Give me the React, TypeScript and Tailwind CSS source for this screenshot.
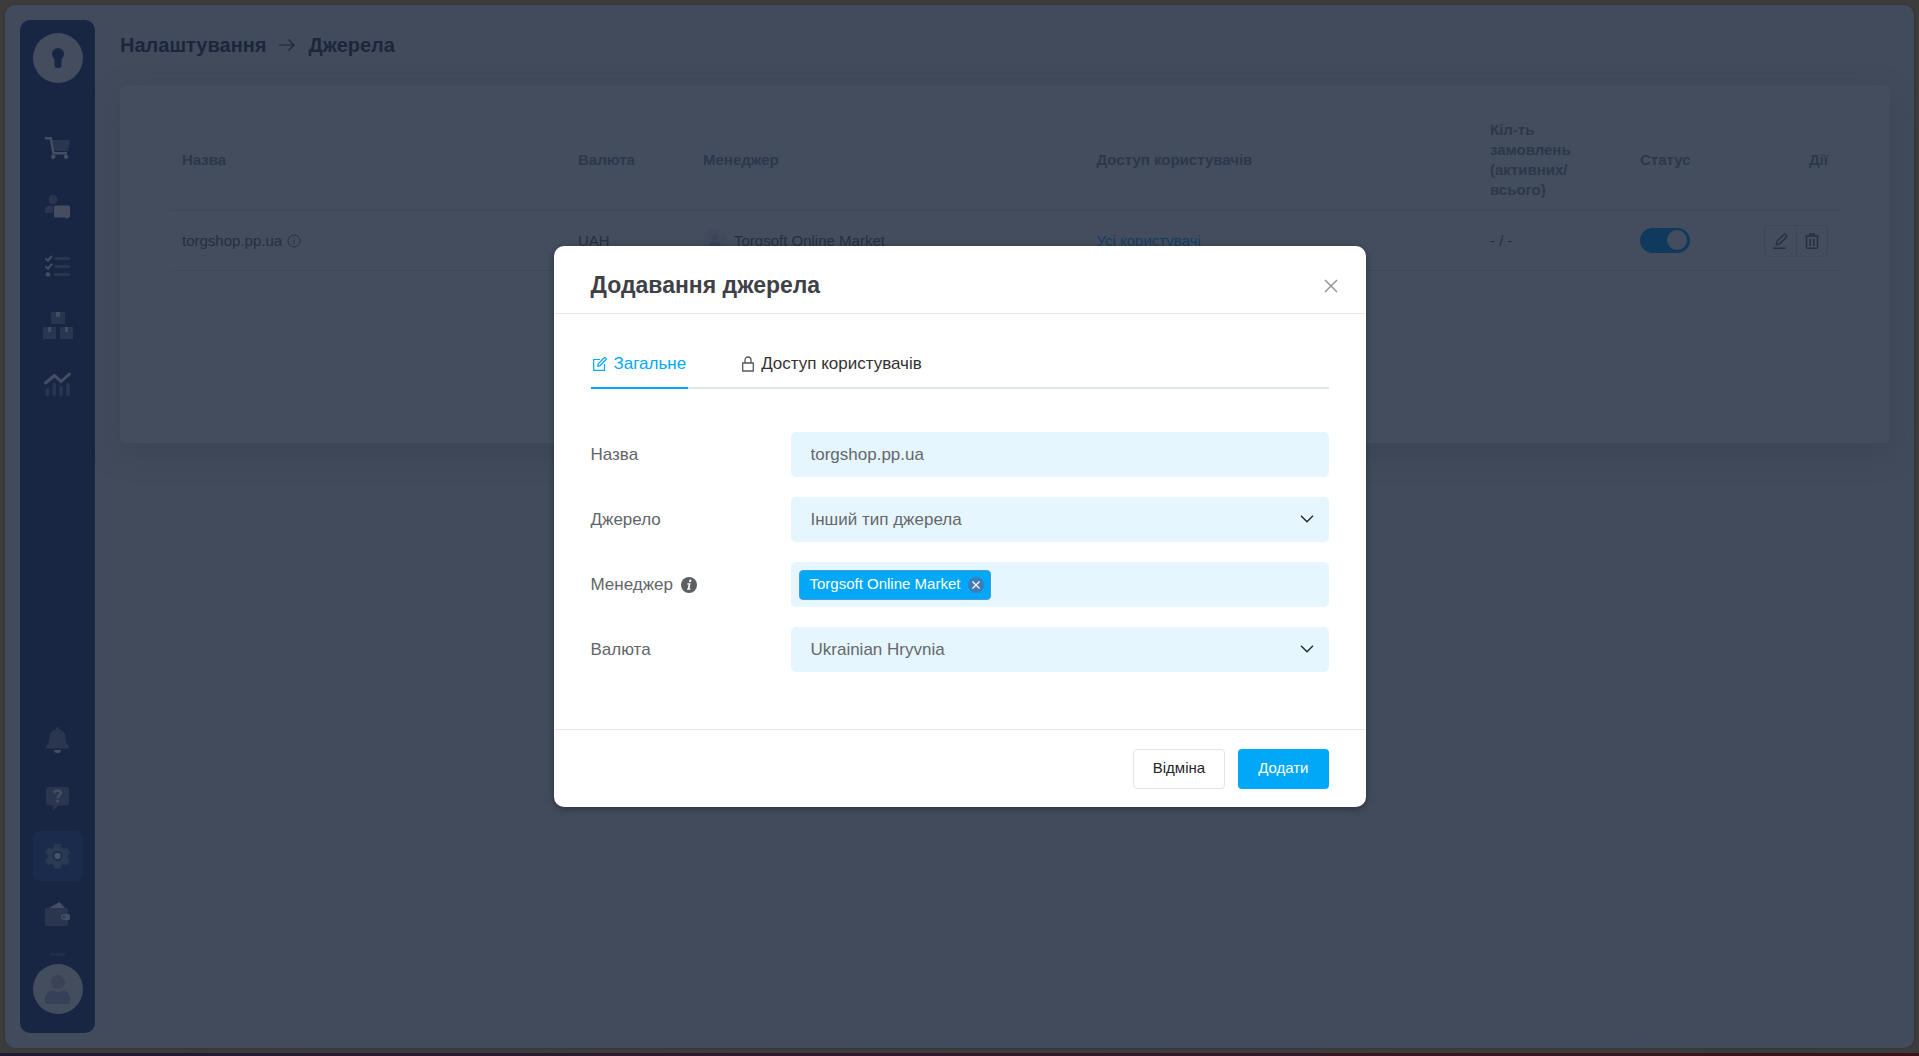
import type { ReactNode } from "react";

const faint = "#2a3650";
const strong = "#454e60";

function NavIcon({ children }: { children: ReactNode }) {
  return (
    <svg aria-hidden="true" className="size-[30px]" fill="none" viewBox="0 0 30 30">
      {children}
    </svg>
  );
}

const mainNav = [
  {
    label: "Замовлення",
    icon: (
      <NavIcon>
        <path d="M9 7h18l-2 11H11z" fill={faint} />
        <path d="M2 5.3h5.8l2.6 15H24" stroke={strong} strokeWidth="2.4" />
        <circle cx="10.3" cy="23.8" fill={strong} r="2.3" />
        <circle cx="23" cy="23.8" fill={strong} r="2.3" />
      </NavIcon>
    ),
  },
  {
    label: "Клієнти",
    icon: (
      <NavIcon>
        <circle cx="10" cy="7.5" fill={faint} r="4.5" />
        <path d="M2 21v-2.5c0-3 2.2-5 5-5h3V21z" fill={faint} />
        <path
          d="M12.500 13.500h13A1.500 1.500 0 0 1 27 15v9a1.500 1.500 0 0 1-1.500 1.500H25V27l-3-1.500h-9.500A1.500 1.500 0 0 1 11 24v-9a1.500 1.500 0 0 1 1.500-1.500z"
          fill={strong}
        />
      </NavIcon>
    ),
  },
  {
    label: "Завдання",
    icon: (
      <NavIcon>
        <path
          d="M2.500 7.500l2.500 2 4-4.500M2.500 15.500l2.500 2 4-4.500"
          stroke={strong}
          strokeWidth="2.2"
        />
        <circle cx="5" cy="23.5" fill={strong} r="2.3" />
        <path d="M11.500 7.500H27M11.500 15.500H27M11.500 23.500H27" stroke={faint} strokeWidth="3" />
      </NavIcon>
    ),
  },
  {
    label: "Товари",
    icon: (
      <NavIcon>
        <path d="M8 2h14v12H8zM0 17h13v12H0zM17 17h13v12H17z" fill={faint} />
        <path d="M13 2h4v5h-4zM5 17h3v5H5zM22 17h3v5h-3z" fill={strong} />
      </NavIcon>
    ),
  },
  {
    label: "Аналітика",
    icon: (
      <NavIcon>
        <path
          d="M4.500 20.500v5M11.300 15.500v10M18 18.500v7M25 15.500v10"
          stroke={faint}
          strokeLinecap="round"
          strokeWidth="3.5"
        />
        <path
          d="M2.500 14L11.500 6.500l6.500 6L26.500 5"
          stroke={strong}
          strokeLinecap="round"
          strokeWidth="3"
        />
      </NavIcon>
    ),
  },
];

const bottomNav = [
  {
    label: "Сповіщення",
    active: false,
    icon: (
      <NavIcon>
        <path
          d="M14.500 2a1.600 1.600 0 0 1 1.600 1.800v.6c4 .8 6.600 4 6.600 8.200 0 5 1 6.500 3 8.400 1 1 .5 2.500-.8 2.500H4.100c-1.300 0-1.800-1.500-.8-2.500 2-1.900 3-3.400 3-8.400 0-4.200 2.600-7.400 6.600-8.200v-.6A1.600 1.600 0 0 1 14.500 2z"
          fill={faint}
        />
        <path d="M11 25h7a3.500 3 0 0 1-7 0z" fill={strong} />
      </NavIcon>
    ),
  },
  {
    label: "Допомога",
    active: false,
    icon: (
      <NavIcon>
        <path
          d="M6 4h17a3 3 0 0 1 3 3v12.500a3 3 0 0 1-3 3h-7L10 27v-4.500H6a3 3 0 0 1-3-3V7a3 3 0 0 1 3-3z"
          fill={faint}
        />
        <path
          d="M11.300 10.500c0-2 1.400-3 3.200-3s3.300 1 3.300 2.800c0 2.200-3.300 2.300-3.300 5"
          stroke={strong}
          strokeWidth="2.3"
        />
        <circle cx="14.5" cy="18" fill={strong} r="1.6" />
      </NavIcon>
    ),
  },
  {
    label: "Налаштування",
    active: true,
    icon: (
      <NavIcon>
        <path
          d="M11.500 3h6l.8 3.600 2.200 1.300L24 6.800l3 5.200-2.700 2.300v2.400L27 19l-3 5-3.500-1.100-2.200 1.300-.8 3.300h-6l-.8-3.300-2.200-1.300L5 24l-3-5 2.700-2.300v-2.400L2 12l3-5.200 3.500 1.100 2.200-1.300z"
          fill="#2b3a53"
        />
        <circle cx="14.5" cy="15" fill="#1a2846" r="4.8" />
        <circle cx="14.5" cy="15" fill="#4a5364" r="3.2" />
      </NavIcon>
    ),
  },
  {
    label: "Баланс",
    active: false,
    icon: (
      <NavIcon>
        <path d="M6 9l10.500-6 5.500 6z" fill={strong} />
        <path
          d="M3.500 9h20A1.500 1.500 0 0 1 25 10.500v15a1.500 1.500 0 0 1-1.500 1.500h-20A1.500 1.500 0 0 1 2 25.500v-15A1.500 1.500 0 0 1 3.500 9z"
          fill={faint}
        />
        <path d="M21 15h4.500A1.500 1.500 0 0 1 27 16.500v3a1.500 1.500 0 0 1-1.500 1.500H21a3 3 0 0 1 0-6z" fill={strong} />
        <circle cx="20.8" cy="18" fill={faint} r="1.2" />
      </NavIcon>
    ),
  },
];

function Person({ className }: { className: string }) {
  return (
    <svg aria-hidden="true" className={className} viewBox="0 0 50 50">
      <circle cx="25" cy="18" fill="#3b4457" r="7" />
      <path
        d="M12 38c0-8 3-11 8-11.500 3 1.500 7 1.500 10 0 5 .5 7 4 7 11.500 0 1.500-1 2-2 2H14c-1 0-2-.5-2-2z"
        fill="#364157"
      />
    </svg>
  );
}

function Sidebar() {
  return (
    <aside className="flex w-[75px] shrink-0 flex-col rounded-[10px] bg-[#182644] pt-[13px] pb-[19px] pl-[13px]">
      <a
        aria-label="Головна"
        className="flex size-[50px] items-center justify-center rounded-full bg-[#444d5d]"
        href="#home"
      >
        <svg className="h-5 w-3" viewBox="0 0 12 20">
          <circle cx="6" cy="6" fill="#182644" r="6" />
          <rect fill="#182644" height="13" rx="3" width="7" x="2.5" y="7" />
        </svg>
      </a>
      <nav className="mt-10 flex flex-col gap-[9px]">
        {mainNav.map((item) => (
          <a
            aria-label={item.label}
            className="flex size-[50px] items-center justify-center"
            href="#nav"
            key={item.label}
          >
            {item.icon}
          </a>
        ))}
      </nav>
      <nav className="mt-auto flex flex-col gap-2">
        {bottomNav.map((item) => (
          <a
            aria-label={item.label}
            className={
              item.active
                ? "flex size-[50px] items-center justify-center rounded-md bg-[#1b2b4b]"
                : "flex size-[50px] items-center justify-center"
            }
            href="#nav"
            key={item.label}
          >
            {item.icon}
          </a>
        ))}
      </nav>
      <div className="mt-[14px] ml-[17px] h-[3px] w-[15px] bg-[#212e4b]" />
      <button
        aria-label="Профіль"
        className="mt-2 size-[50px] shrink-0 rounded-full bg-[#444d5d]"
        type="button"
      >
        <Person className="size-[50px]" />
      </button>
    </aside>
  );
}

function SourcesTable() {
  const th = "border-b border-[#3f485a] px-3 py-[10px] font-bold";
  const td = "h-[60px] border-b border-[#3f485a] px-3";

  return (
    <table className="w-full table-fixed border-separate border-spacing-0 text-left text-[15px] leading-5">
      <colgroup>
        <col className="w-[396px]" />
        <col className="w-[125px]" />
        <col />
        <col />
        <col className="w-[150px]" />
        <col className="w-[212px]" />
      </colgroup>
      <thead className="text-[#2c374c]">
        <tr>
          <th className={th}>Назва</th>
          <th className={th}>Валюта</th>
          <th className={th}>Менеджер</th>
          <th className={th}>Доступ користувачів</th>
          <th className={th}>Кіл-ть замовлень (активних/ всього)</th>
          <th className={th}>
            <div className="flex justify-between">
              <span>Статус</span>
              <span>Дії</span>
            </div>
          </th>
        </tr>
      </thead>
      <tbody className="text-[#242f43]">
        <tr>
          <td className={td}>
            <div className="flex items-center gap-[5px]">
              torgshop.pp.ua
              <svg className="size-[14px]" fill="none" stroke="currentColor" viewBox="0 0 14 14">
                <circle cx="7" cy="7" r="6" />
                <path d="M7 6v4.500M7 3.500v1.200" />
              </svg>
            </div>
          </td>
          <td className={td}>UAH</td>
          <td className={td}>
            <div className="flex items-center gap-[7px]">
              <Person className="size-6 rounded-full bg-[#404a5c]" />
              Torgsoft Online Market
            </div>
          </td>
          <td className={td}>
            <a className="text-[#123d62]" href="#users">
              Усі користувачі
            </a>
          </td>
          <td className={td}>- / -</td>
          <td className={td}>
            <div className="flex items-center justify-between">
              <input
                aria-label="Статус"
                className="h-[25px] w-[50px] appearance-none rounded-full bg-[#0f3a5e] p-[2px] before:ml-[25px] before:block before:size-5 before:rounded-full before:bg-[#444d5d]"
                defaultChecked
                type="checkbox"
              />
              <div className="flex h-8 w-16 divide-x divide-[#3e4759] rounded-[4px] border border-[#3e4759]">
                <button
                  aria-label="Редагувати"
                  className="flex flex-1 items-center justify-center"
                  type="button"
                >
                  <svg className="size-4" fill="none" stroke="currentColor" strokeWidth="1.4" viewBox="0 0 16 16">
                    <path d="M1 15.300h12.500M4.500 11.800l.6-3.600L12 1.400a1 1 0 0 1 1.400 0l1.100 1.100a1 1 0 0 1 0 1.400L7.800 10.800z" />
                  </svg>
                </button>
                <button
                  aria-label="Видалити"
                  className="flex flex-1 items-center justify-center"
                  type="button"
                >
                  <svg className="size-4" fill="none" stroke="currentColor" strokeWidth="1.4" viewBox="0 0 16 16">
                    <path d="M1 3h14M5 3l1-2h4l1 2M2.500 3v11.300a1 1 0 0 0 1 1h9a1 1 0 0 0 1-1V3M6.200 6v7M9.800 6v7" />
                  </svg>
                </button>
              </div>
            </div>
          </td>
        </tr>
      </tbody>
    </table>
  );
}

function Chevron() {
  return (
    <svg
      aria-hidden="true"
      className="pointer-events-none absolute top-[18px] right-[15px] h-2 w-[14px]"
      fill="none"
      stroke="#23272b"
      strokeWidth="1.4"
      viewBox="0 0 14 8"
    >
      <path d="M1 .8l6 6 6-6" />
    </svg>
  );
}

const control =
  "h-[45px] w-full appearance-none rounded-[5px] bg-[#e5f6ff] px-5 text-[17px] text-[#65686c] outline-none";

function SourceDialog() {
  return (
    <div
      aria-labelledby="dialog-title"
      className="w-[812px] rounded-[10px] bg-white text-[17px] text-[#626569] shadow-[0_2px_6px_rgba(20,28,42,0.5)]"
      role="dialog"
    >
      <div className="flex h-[68px] items-center justify-between border-b border-[#e6e8ea] pt-3 pr-7 pl-[37px]">
        <h2 className="text-[23px] font-bold text-[#404047]" id="dialog-title">
          Додавання джерела
        </h2>
        <button aria-label="Закрити" type="button">
          <svg className="size-[14px]" stroke="#8d9095" strokeWidth="1.4" viewBox="0 0 14 14">
            <path d="M1 1l12 12M13 1L1 13" />
          </svg>
        </button>
      </div>

      <form className="px-[37px] pt-[25px] pb-[57px]">
        <div className="flex gap-[52px] border-b-2 border-[#e1e6ea]" role="tablist">
          <button
            aria-selected="true"
            className="-mb-[2px] flex h-[50px] items-center gap-[7px] border-b-2 border-[#00a8f7] pt-[2px] pr-[2px] pl-[2px] text-[#00a8f7]"
            role="tab"
            type="button"
          >
            <svg className="size-[14px]" fill="none" stroke="currentColor" strokeWidth="1.2" viewBox="0 0 14 14">
              <path d="M7 2.500H.7v10.800h10.800V7M4.800 9.200l.4-2.400L11 1a1.200 1.200 0 0 1 1.800 0 1.200 1.200 0 0 1 0 1.800L7.100 8.700z" />
            </svg>
            Загальне
          </button>
          <button
            aria-selected="false"
            className="-mb-[2px] flex h-[50px] items-center gap-[7px] border-b-2 border-transparent pt-[2px] pr-[2px] pl-[2px] text-[#333]"
            role="tab"
            type="button"
          >
            <svg className="h-4 w-3" fill="none" stroke="#55585c" strokeWidth="1.3" viewBox="0 0 12 16">
              <path d="M.7 7h10.600v8H.7zM3 7V4a3 3 0 0 1 6 0v3" />
            </svg>
            Доступ користувачів
          </button>
        </div>

        <div className="mt-[43px] grid grid-cols-[200px_1fr] items-center gap-y-5">
          <label htmlFor="source-name">Назва</label>
          <input className={control} defaultValue="torgshop.pp.ua" id="source-name" type="text" />

          <label htmlFor="source-type">Джерело</label>
          <div className="relative">
            <select className={control} id="source-type">
              <option>Інший тип джерела</option>
            </select>
            <Chevron />
          </div>

          <label className="flex items-center gap-2" htmlFor="source-manager">
            Менеджер
            <svg aria-hidden="true" className="size-4" viewBox="0 0 16 16">
              <circle cx="8" cy="8" fill="#5d6063" r="8" />
              <path
                d="M8.400 2.800h2L10 4.900H8zM6.400 6.200h3.200l-1.100 5.300h1l-.2 1.200H6l.2-1.200h.6l.8-4.100H6.200z"
                fill="#fff"
              />
            </svg>
          </label>
          <div className="flex h-[45px] items-center rounded-[5px] bg-[#e5f6ff] px-2">
            <span className="flex h-[30px] shrink-0 items-center gap-2 rounded-[4px] border border-[#4a9bd8] bg-[#00a8f7] pr-[6px] pl-[10px] text-[15px] text-white">
              Torgsoft Online Market
              <button
                aria-label="Прибрати"
                className="flex size-4 items-center justify-center rounded-full bg-[#427bb9]"
                type="button"
              >
                <svg className="size-2" stroke="#fff" strokeWidth="1.3" viewBox="0 0 8 8">
                  <path d="M.5 .5l7 7M7.500 .5l-7 7" />
                </svg>
              </button>
            </span>
            <input
              className="h-full min-w-0 flex-1 bg-transparent outline-none"
              id="source-manager"
              type="text"
            />
          </div>

          <label htmlFor="source-currency">Валюта</label>
          <div className="relative">
            <select className={control} id="source-currency">
              <option>Ukrainian Hryvnia</option>
            </select>
            <Chevron />
          </div>
        </div>
      </form>

      <div className="flex h-[78px] items-center justify-end gap-[13px] border-t border-[#e6e8ea] px-[37px] text-[15px]">
        <button
          className="h-10 rounded-[4px] border border-[#e1e4e9] px-[19px] text-[#23262a]"
          type="button"
        >
          Відміна
        </button>
        <button className="h-10 rounded-[4px] bg-[#00a8f7] px-5 text-white" type="button">
          Додати
        </button>
      </div>
    </div>
  );
}

export default function App() {
  return (
    <div className="flex h-screen flex-col bg-[#3c3c3c] font-['Liberation_Sans',Arial,sans-serif]">
      <div className="relative flex flex-1 flex-col p-[5px]">
        <div className="flex flex-1 gap-[25px] rounded-[10px] bg-[#424b5b] py-[15px] pr-6 pl-[15px] shadow-[0_0_2px_#2c2c2c]">
          <Sidebar />
          <main className="min-w-0 flex-1">
            <h1 className="flex h-[50px] items-center gap-[13px] text-[20px] font-bold text-[#1c263b]">
              Налаштування
              <svg className="h-3 w-4" fill="none" stroke="currentColor" strokeWidth="1.2" viewBox="0 0 16 12">
                <path d="M0 6h15M9.500 .5L15 6l-5.500 5.500" />
              </svg>
              Джерела
            </h1>
            <section className="mt-[15px] min-h-[358px] rounded-[5px] bg-[#444d5d] px-[50px] pt-[25px] shadow-[0_10px_30px_rgba(40,50,72,0.25)]">
              <SourcesTable />
            </section>
          </main>
        </div>
        <div className="absolute inset-0 flex items-center justify-center">
          <SourceDialog />
        </div>
      </div>
      <div className="h-[3px] bg-linear-to-r from-[#1f1a33] via-[#33182a] to-[#3a1218]" />
    </div>
  );
}
